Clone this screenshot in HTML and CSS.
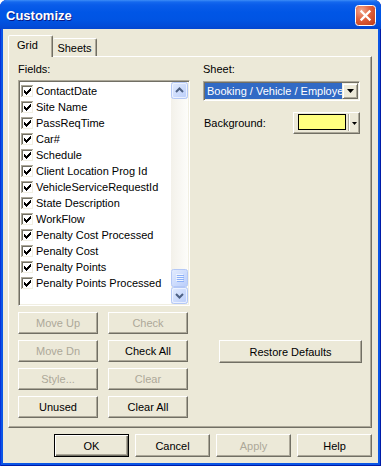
FILE: index.html
```html
<!DOCTYPE html>
<html>
<head>
<meta charset="utf-8">
<title>Customize</title>
<link rel="stylesheet" href="styles.css">
</head>
<body>
<svg class="defs" width="0" height="0">
  <defs>
    <linearGradient id="sbg" x1="0" y1="0" x2="1" y2="1">
      <stop offset="0" stop-color="#E3ECFE"/>
      <stop offset="1" stop-color="#B9CDFB"/>
    </linearGradient>
    <radialGradient id="cg" cx="0.3" cy="0.25" r="0.95">
      <stop offset="0" stop-color="#F2A98F"/>
      <stop offset="0.45" stop-color="#E0623F"/>
      <stop offset="1" stop-color="#C13D16"/>
    </radialGradient>
    <symbol id="chk" viewBox="0 0 13 13">
      <rect x="0" y="0" width="13" height="13" fill="#fff"/>
      <path d="M0 0h12v1H1v11H0z" fill="#ACA899"/>
      <path d="M1 1h10v1H2v9H1z" fill="#716F64"/>
      <path d="M12 0h1v13H0v-1h12z" fill="#fff"/>
      <path d="M11 1h1v11H1v-1h10z" fill="#F1EFE2"/>
      <path d="M9 3h1v1H9z M8 4h2v1H8z M3 5h1v1H3z M7 5h3v1H7z M3 6h2v1H3z M6 6h3v1H6z M3 7h5v1H3z M4 8h3v1H4z M5 9h1v1H5z" fill="#000"/>
    </symbol>
    <symbol id="sbtn" viewBox="0 0 17 17">
      <rect x="0.5" y="0.5" width="16" height="16" rx="2" fill="url(#sbg)" stroke="#B4C8F6"/>
      <rect x="1.5" y="1.5" width="14" height="14" rx="1.5" fill="none" stroke="#F2F6FF" stroke-opacity="0.8"/>
    </symbol>
  </defs>
</svg>
<div class="window">
  <div class="titlebar">
    <span class="title">Customize</span>
    <svg class="close" width="21" height="21" viewBox="0 0 21 21">
      <rect x="0.5" y="0.5" width="20" height="20" rx="3" fill="url(#cg)" stroke="#fff"/>
      <path d="M6.5 6.5 L14.5 14.5 M14.5 6.5 L6.5 14.5" stroke="#fff" stroke-width="2.3" stroke-linecap="square"/>
    </svg>
  </div>
  <div class="client">
    <div class="tabs">
      <div class="tab tab-active">Grid</div>
      <div class="tab tab-sheets">Sheets</div>
    </div>
    <div class="panel">
      <div class="col-left">
        <div class="label">Fields:</div>
        <div class="listbox">
          <ul class="items">
            <li><svg class="cb" width="13" height="13"><use href="#chk"/></svg>ContactDate</li>
            <li><svg class="cb" width="13" height="13"><use href="#chk"/></svg>Site Name</li>
            <li><svg class="cb" width="13" height="13"><use href="#chk"/></svg>PassReqTime</li>
            <li><svg class="cb" width="13" height="13"><use href="#chk"/></svg>Car#</li>
            <li><svg class="cb" width="13" height="13"><use href="#chk"/></svg>Schedule</li>
            <li><svg class="cb" width="13" height="13"><use href="#chk"/></svg>Client Location Prog Id</li>
            <li><svg class="cb" width="13" height="13"><use href="#chk"/></svg>VehicleServiceRequestId</li>
            <li><svg class="cb" width="13" height="13"><use href="#chk"/></svg>State Description</li>
            <li><svg class="cb" width="13" height="13"><use href="#chk"/></svg>WorkFlow</li>
            <li><svg class="cb" width="13" height="13"><use href="#chk"/></svg>Penalty Cost Processed</li>
            <li><svg class="cb" width="13" height="13"><use href="#chk"/></svg>Penalty Cost</li>
            <li><svg class="cb" width="13" height="13"><use href="#chk"/></svg>Penalty Points</li>
            <li><svg class="cb" width="13" height="13"><use href="#chk"/></svg>Penalty Points Processed</li>
          </ul>
          <div class="vscroll">
            <svg class="sb" width="17" height="17" viewBox="0 0 17 17">
              <use href="#sbtn"/>
              <path d="M5 10 L8.5 6.5 L12 10" fill="none" stroke="#4D6185" stroke-width="2"/>
            </svg>
            <div class="track">
              <svg class="thumb" width="17" height="18" viewBox="0 0 17 18">
                <rect x="0.5" y="0.5" width="16" height="17" rx="2" fill="url(#sbg)" stroke="#B4C8F6"/>
                <path d="M5 5.5h7 M5 7.5h7 M5 9.5h7 M5 11.5h7" stroke="#EEF4FE"/>
                <path d="M6 6.5h7 M6 8.5h7 M6 10.5h7 M6 12.5h7" stroke="#8CB0F8"/>
              </svg>
            </div>
            <svg class="sb" width="17" height="17" viewBox="0 0 17 17">
              <use href="#sbtn"/>
              <path d="M5 7 L8.5 10.5 L12 7" fill="none" stroke="#4D6185" stroke-width="2"/>
            </svg>
          </div>
        </div>
        <div class="btn-grid">
          <button class="btn" disabled>Move Up</button>
          <button class="btn" disabled>Check</button>
          <button class="btn" disabled>Move Dn</button>
          <button class="btn">Check All</button>
          <button class="btn" disabled>Style...</button>
          <button class="btn" disabled>Clear</button>
          <button class="btn">Unused</button>
          <button class="btn">Clear All</button>
        </div>
      </div>
      <div class="col-right">
        <div class="label">Sheet:</div>
        <div class="combo">
          <span class="combo-value">Booking / Vehicle / Employee Sheet</span>
          <span class="combo-btn">
            <svg width="7" height="4" viewBox="0 0 7 4"><path d="M0 0h7L3.5 4z" fill="#000"/></svg>
          </span>
        </div>
        <div class="bg-row">
          <span class="bg-label">Background:</span>
          <div class="color-btn">
            <span class="swatch-wrap"><span class="swatch"></span></span>
            <span class="color-divider"></span>
            <span class="color-arrow">
              <svg width="5" height="3" viewBox="0 0 5 3"><path d="M0 0h5L2.5 3z" fill="#000"/></svg>
            </span>
          </div>
        </div>
        <button class="btn btn-restore">Restore Defaults</button>
      </div>
    </div>
    <div class="footer">
      <button class="btn btn-foot btn-default">OK</button>
      <button class="btn btn-foot">Cancel</button>
      <button class="btn btn-foot" disabled>Apply</button>
      <button class="btn btn-foot">Help</button>
    </div>
  </div>
</div>
</body>
</html>
```

FILE: styles.css
```css
* {
  box-sizing: border-box;
}

html,
body {
  margin: 0;
  padding: 0;
}

body {
  width: 381px;
  height: 466px;
  overflow: hidden;
  background: #ffffff;
  font-family: "Liberation Sans", Arial, sans-serif;
  font-size: 11px;
  color: #000;
}

.defs {
  display: block;
  width: 0;
  height: 0;
  overflow: hidden;
}

.window {
  width: 381px;
  height: 466px;
  display: flex;
  flex-direction: column;
  background: #0A55E6;
  border-radius: 7px 7px 0 0;
  box-shadow: inset 1px 0 #0831D9, inset -1px 0 #001CA8, inset 0 -1px #001CA8;
}

.titlebar {
  height: 29px;
  flex: none;
  display: flex;
  align-items: center;
  justify-content: space-between;
  padding: 1px 5px 0 6px;
  border-radius: 7px 7px 0 0;
  background: linear-gradient(to bottom,
    #3D8DF7 0px,
    #1468EE 2px,
    #0A5CE9 5px,
    #0056E6 12px,
    #0054E3 20px,
    #024CD8 26px,
    #0346D0 29px);
}

.title {
  color: #fff;
  font-weight: bold;
  font-size: 13px;
  line-height: 15px;
  text-shadow: 1px 1px #0A1883;
}

.close {
  display: block;
}

.client {
  flex: 1;
  margin: 0 3px 3px 3px;
  background: #ECE9D8;
  padding: 6px 6px 6px 5px;
  display: flex;
  flex-direction: column;
}

.tabs {
  display: flex;
  align-items: flex-end;
  height: 22px;
  margin-bottom: -1px;
  position: relative;
  z-index: 1;
}

.tab {
  background: #ECE9D8;
  border: 1px solid;
  border-bottom: none;
  border-color: #fff #716F64 transparent #fff;
  border-radius: 2px 2px 0 0;
  box-shadow: inset -1px 0 #ACA899;
  line-height: 13px;
  padding-top: 3px;
}

.tab-active {
  width: 45px;
  height: 22px;
  padding-left: 8px;
}

.tab-sheets {
  width: 44px;
  height: 18px;
  margin-bottom: 1px;
  text-align: center;
  border-left: none;
}

.panel {
  flex: none;
  display: flex;
  gap: 13px;
  padding: 6px 9px 9px 9px;
  border: 1px solid;
  border-color: #fff #716F64 #716F64 #fff;
  box-shadow: inset -1px -1px #ACA899;
}

.col-left {
  width: 172px;
  display: flex;
  flex-direction: column;
}

.label {
  line-height: 13px;
  height: 13px;
  margin-bottom: 4px;
}

.listbox {
  width: 172px;
  height: 226px;
  display: flex;
  background: #fff;
  border: 1px solid;
  border-color: #ACA899 #fff #fff #ACA899;
  box-shadow: inset 1px 1px #716F64, inset -1px -1px #F1EFE2;
  padding: 1px;
}

.items {
  list-style: none;
  margin: 0;
  padding: 1px 0 0 1px;
  flex: 1;
  overflow: hidden;
}

.items li {
  height: 16px;
  line-height: 16px;
  display: flex;
  align-items: center;
  white-space: nowrap;
}

.cb {
  display: block;
  flex: none;
  margin-right: 2px;
}

.vscroll {
  width: 17px;
  flex: none;
  display: flex;
  flex-direction: column;
  background: linear-gradient(to right, #F3F1EA, #FDFDFA);
}

.sb {
  display: block;
  flex: none;
}

.track {
  flex: 1;
  display: flex;
  flex-direction: column;
  justify-content: flex-end;
}

.thumb {
  display: block;
}

.btn-grid {
  margin-top: 6px;
  display: grid;
  grid-template-columns: 80px 80px;
  grid-auto-rows: 22px;
  column-gap: 10px;
  row-gap: 6px;
}

.btn {
  font-family: inherit;
  font-size: 11px;
  color: #000;
  background: #ECE9D8;
  padding: 0;
  margin: 0;
  border: 1px solid;
  border-color: #fff #716F64 #716F64 #fff;
  border-radius: 0;
  box-shadow: inset -1px -1px #ACA899;
  text-align: center;
}

.btn:disabled {
  color: #ACA899;
}

.col-right {
  width: 159px;
  display: flex;
  flex-direction: column;
}

.col-right .label {
  margin-bottom: 5px;
}

.combo {
  width: 157px;
  height: 20px;
  display: flex;
  background: #fff;
  border: 1px solid;
  border-color: #ACA899 #fff #fff #ACA899;
  box-shadow: inset 1px 1px #716F64, inset -1px -1px #F1EFE2;
  padding: 1px;
}

.combo-value {
  flex: 1;
  min-width: 0;
  overflow: hidden;
  white-space: nowrap;
  background: #316AC5;
  color: #fff;
  line-height: 16px;
  padding-left: 2px;
}

.combo-btn {
  width: 16px;
  height: 16px;
  flex: none;
  display: flex;
  align-items: center;
  justify-content: center;
  background: #ECE9D8;
  border: 1px solid;
  border-color: #F1EFE2 #716F64 #716F64 #F1EFE2;
  box-shadow: inset 1px 1px #fff, inset -1px -1px #ACA899;
}

.combo-btn svg,
.color-arrow svg {
  display: block;
}

.bg-row {
  width: 157px;
  margin-top: 11px;
  height: 22px;
  display: flex;
  align-items: center;
  justify-content: space-between;
}

.bg-label {
  margin-left: 1px;
  line-height: 13px;
}

.color-btn {
  width: 67px;
  height: 22px;
  display: flex;
  align-items: stretch;
  background: #ECE9D8;
  border: 1px solid;
  border-color: #fff #716F64 #716F64 #fff;
  box-shadow: inset -1px -1px #ACA899;
}

.swatch-wrap {
  flex: 1;
  display: flex;
  padding: 1px 2px 3px 4px;
}

.swatch {
  flex: 1;
  background: #FFFF80;
  border: 1px solid #000;
}

.color-divider {
  width: 2px;
  margin: 1px 0 2px;
  border-left: 1px solid #ACA899;
  border-right: 1px solid #fff;
}

.color-arrow {
  width: 9px;
  display: flex;
  align-items: center;
  justify-content: center;
}

.btn-restore {
  margin-top: auto;
  margin-bottom: 55px;
  margin-left: 16px;
  width: 143px;
  height: 23px;
}

.footer {
  margin-top: 6px;
  display: flex;
  justify-content: flex-end;
  gap: 6px;
}

.btn-foot {
  width: 75px;
  height: 23px;
}

.btn-default {
  border: 1px solid #000;
  box-shadow: inset 1px 1px #fff, inset -1px -1px #716F64, inset -2px -2px #ACA899;
}
```
